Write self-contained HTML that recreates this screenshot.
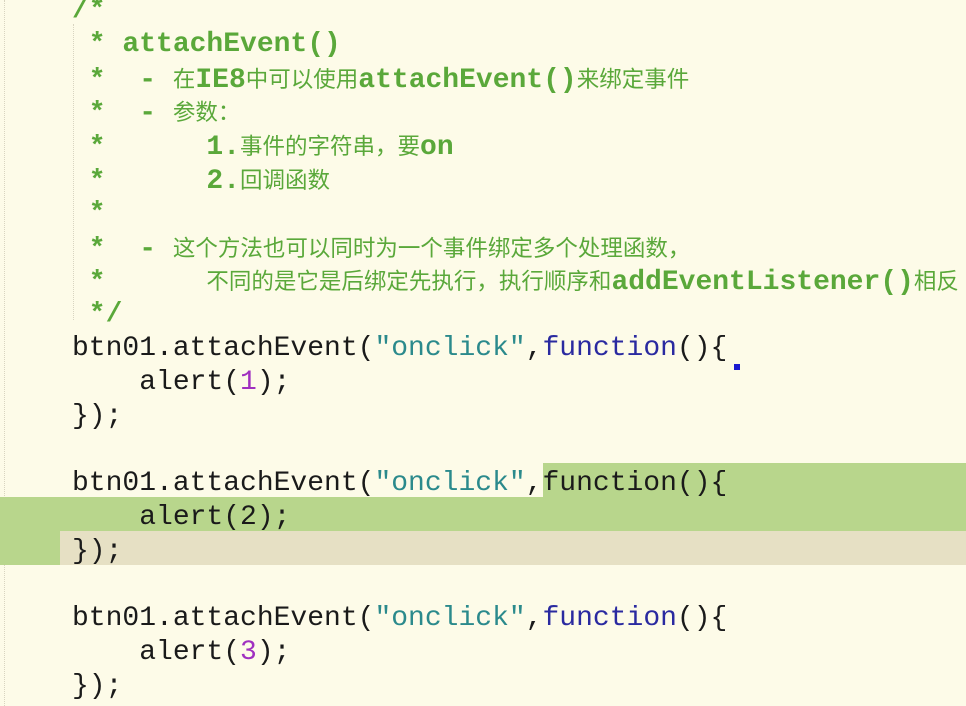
<!DOCTYPE html>
<html><head><meta charset="utf-8"><style>
html,body{margin:0;padding:0}
body{width:966px;height:706px;overflow:hidden;background:#fdfbe8;position:relative;font-family:"Liberation Mono",monospace;font-size:28px;color:#1a1a1a}
.l{position:absolute;left:72px;height:33.8px;line-height:33.8px;white-space:pre;margin-top:4px}
.cm{color:#5aa83a;font-weight:bold}
.c{font-family:"Noto Sans CJK SC",sans-serif;font-size:22.5px;font-weight:normal;color:#5aa83a}
.s{color:#2b8a8c}.k{color:#2a2aa0}.n{color:#a030c0}
.bar{position:absolute}
</style></head><body>
<div style="position:absolute;left:4px;top:0;height:706px;border-left:1px dotted #d8d4c0"></div>
<div style="position:absolute;left:73px;top:24px;height:296px;border-left:1px dotted #d8d4c0"></div>
<div class="bar" style="left:543px;top:463px;width:423px;height:34px;background:#b8d68c"></div>
<div class="bar" style="left:0;top:497px;width:966px;height:34px;background:#b8d68c"></div>
<div class="bar" style="left:0;top:531px;width:60px;height:34px;background:#b8d68c"></div>
<div class="bar" style="left:60px;top:531px;width:906px;height:34px;background:#e6e0c4"></div>
<div style="position:absolute;left:734px;top:364px;width:6px;height:6px;background:#1a1ad0"></div>
<div class="l cm" style="top:-10px">/*</div>
<div class="l cm" style="top:23.8px"> * attachEvent()</div>
<div class="l cm" style="top:57.6px"> *  - <span class="c">在</span>IE8<span class="c">中可以使用</span>attachEvent()<span class="c">来绑定事件</span></div>
<div class="l cm" style="top:91.4px"> *  - <span class="c">参数：</span></div>
<div class="l cm" style="top:125.2px"> *      1.<span class="c">事件的字符串，要</span>on</div>
<div class="l cm" style="top:159px"> *      2.<span class="c">回调函数</span></div>
<div class="l cm" style="top:192.8px"> *</div>
<div class="l cm" style="top:226.6px"> *  - <span class="c">这个方法也可以同时为一个事件绑定多个处理函数，</span></div>
<div class="l cm" style="top:260.4px"> *      <span class="c">不同的是它是后绑定先执行，执行顺序和</span>addEventListener()<span class="c">相反</span></div>
<div class="l cm" style="top:294.2px"> */</div>
<div class="l" style="top:328px">btn01.attachEvent(<span class="s">"onclick"</span>,<span class="k">function</span>(){</div>
<div class="l" style="top:361.8px">    alert(<span class="n">1</span>);</div>
<div class="l" style="top:395.6px">});</div>
<div class="l" style="top:463.2px">btn01.attachEvent(<span class="s">"onclick"</span>,function(){</div>
<div class="l" style="top:497px">    alert(2);</div>
<div class="l" style="top:530.8px">});</div>
<div class="l" style="top:598.4px">btn01.attachEvent(<span class="s">"onclick"</span>,<span class="k">function</span>(){</div>
<div class="l" style="top:632.2px">    alert(<span class="n">3</span>);</div>
<div class="l" style="top:666px">});</div>
</body></html>
